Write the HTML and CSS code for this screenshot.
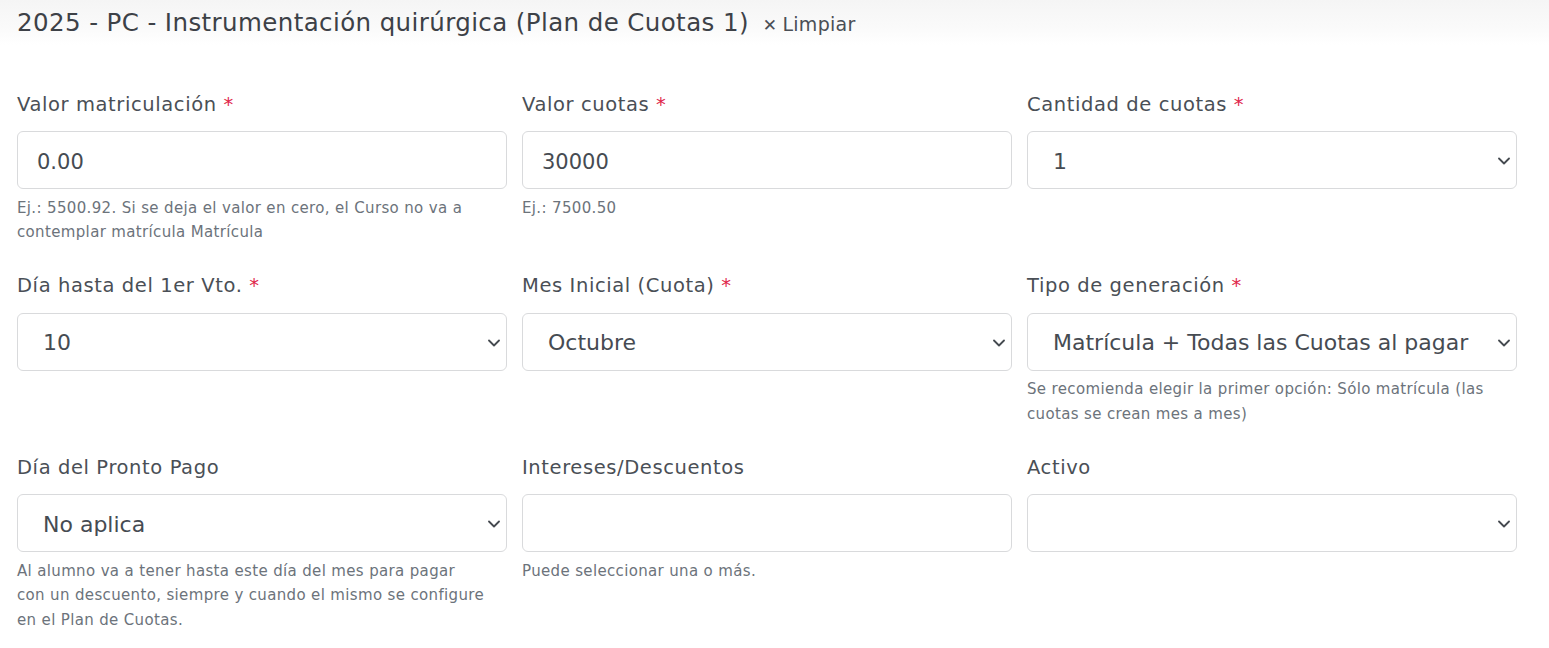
FILE: index.html
```html
<!DOCTYPE html>
<html lang="es">
<head>
<meta charset="utf-8">
<title>Plan de Cuotas</title>
<link rel="stylesheet" href="styles.css">
</head>
<body>
<header class="header">
  <h1 class="title">2025 - PC - Instrumentación quirúrgica (Plan de Cuotas 1)</h1>
  <a class="clear" href="#"><span class="clear-x">✕</span>Limpiar</a>
</header>
<main class="form">
  <div class="field">
    <label class="label">Valor matriculación <span class="req">*</span></label>
    <input class="control input" type="text" value="0.00">
    <p class="help">Ej.: 5500.92. Si se deja el valor en cero, el Curso no va a contemplar matrícula Matrícula</p>
  </div>
  <div class="field">
    <label class="label">Valor cuotas <span class="req">*</span></label>
    <input class="control input" type="text" value="30000">
    <p class="help">Ej.: 7500.50</p>
  </div>
  <div class="field">
    <label class="label">Cantidad de cuotas <span class="req">*</span></label>
    <div class="select-wrap">
      <select class="control select"><option>1</option></select>
      <svg class="chev" viewBox="0 0 12 8" width="12" height="8"><path d="M1 1.5 6 6.5 11 1.5" fill="none" stroke="#454a50" stroke-width="1.8" stroke-linecap="round" stroke-linejoin="round"/></svg>
    </div>
    <p class="help"></p>
  </div>

  <div class="field">
    <label class="label">Día hasta del 1er Vto. <span class="req">*</span></label>
    <div class="select-wrap">
      <select class="control select"><option>10</option></select>
      <svg class="chev" viewBox="0 0 12 8" width="12" height="8"><path d="M1 1.5 6 6.5 11 1.5" fill="none" stroke="#454a50" stroke-width="1.8" stroke-linecap="round" stroke-linejoin="round"/></svg>
    </div>
    <p class="help"></p>
  </div>
  <div class="field">
    <label class="label">Mes Inicial (Cuota) <span class="req">*</span></label>
    <div class="select-wrap">
      <select class="control select"><option>Octubre</option></select>
      <svg class="chev" viewBox="0 0 12 8" width="12" height="8"><path d="M1 1.5 6 6.5 11 1.5" fill="none" stroke="#454a50" stroke-width="1.8" stroke-linecap="round" stroke-linejoin="round"/></svg>
    </div>
    <p class="help"></p>
  </div>
  <div class="field">
    <label class="label">Tipo de generación <span class="req">*</span></label>
    <div class="select-wrap">
      <select class="control select"><option>Matrícula + Todas las Cuotas al pagar</option></select>
      <svg class="chev" viewBox="0 0 12 8" width="12" height="8"><path d="M1 1.5 6 6.5 11 1.5" fill="none" stroke="#454a50" stroke-width="1.8" stroke-linecap="round" stroke-linejoin="round"/></svg>
    </div>
    <p class="help">Se recomienda elegir la primer opción: Sólo matrícula (las cuotas se crean mes a mes)</p>
  </div>

  <div class="field">
    <label class="label">Día del Pronto Pago</label>
    <div class="select-wrap">
      <select class="control select"><option>No aplica</option></select>
      <svg class="chev" viewBox="0 0 12 8" width="12" height="8"><path d="M1 1.5 6 6.5 11 1.5" fill="none" stroke="#454a50" stroke-width="1.8" stroke-linecap="round" stroke-linejoin="round"/></svg>
    </div>
    <p class="help">Al alumno va a tener hasta este día del mes para pagar con&nbsp;un&nbsp;descuento, siempre y cuando el mismo se configure en el Plan de Cuotas.</p>
  </div>
  <div class="field">
    <label class="label">Intereses/Descuentos</label>
    <input class="control input" type="text" value="">
    <p class="help">Puede seleccionar una o más.</p>
  </div>
  <div class="field">
    <label class="label">Activo</label>
    <div class="select-wrap">
      <select class="control select"><option></option></select>
      <svg class="chev" viewBox="0 0 12 8" width="12" height="8"><path d="M1 1.5 6 6.5 11 1.5" fill="none" stroke="#454a50" stroke-width="1.8" stroke-linecap="round" stroke-linejoin="round"/></svg>
    </div>
    <p class="help"></p>
  </div>
</main>
</body>
</html>
```

FILE: styles.css
```css
* { box-sizing: border-box; }

html, body {
  margin: 0;
  background: #ffffff;
  font-family: "DejaVu Sans", "Open Sans", sans-serif;
  color: #4a4f56;
}

.header {
  display: flex;
  align-items: baseline;
  gap: 14px;
  height: 45px;
  padding: 6px 17px 0;
  background: linear-gradient(#f5f5f5, #fafafa 60%, #ffffff);
}

.title {
  margin: 0;
  font-size: 24.5px;
  font-weight: 400;
  letter-spacing: 0.4px;
  line-height: 34px;
  color: #3d4147;
}

.clear {
  font-size: 19px;
  letter-spacing: 0.3px;
  color: #4a4f56;
  text-decoration: none;
}

.clear-x {
  margin-right: 5px;
  font-size: 17px;
}

.form {
  display: grid;
  grid-template-columns: repeat(3, 490px);
  column-gap: 15px;
  padding: 45.5px 17px 0;
}

.field {
  display: flex;
  flex-direction: column;
  margin-bottom: 27.5px;
}

.label {
  font-size: 19.5px;
  letter-spacing: 0.6px;
  line-height: 27px;
  margin-bottom: 13.5px;
  color: #4a4f56;
}

.req { color: #e0264a; }

.control {
  width: 100%;
  height: 58px;
  border: 1px solid #d9dadc;
  border-radius: 6px;
  background: #ffffff;
  font-family: inherit;
  color: #464b52;
  outline: none;
}

.input {
  padding: 3px 19px 0;
  font-size: 21px;
}

.select-wrap { position: relative; }

.select {
  appearance: none;
  -webkit-appearance: none;
  padding: 2px 40px 0 25px;
  font-size: 22px;
}

.chev {
  position: absolute;
  right: 7px;
  top: 26px;
  pointer-events: none;
}

.help {
  margin: 6.5px 0 0;
  min-height: 49px;
  font-size: 15px;
  letter-spacing: 0.35px;
  line-height: 24.5px;
  color: #6c737b;
}
```
